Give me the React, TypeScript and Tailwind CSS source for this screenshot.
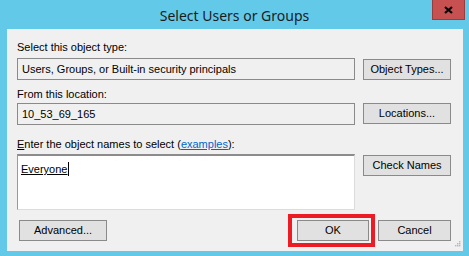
import React from "react";

const ui = { fontFamily: '"Liberation Sans", Arial, sans-serif' };

function Btn({ children, className = "" }: { children: React.ReactNode; className?: string }) {
  return (
    <div
      className={`h-[21px] flex items-center justify-center border border-[#8a8a8a] bg-[#e1e1e1] text-[11px] text-black ${className}`}
    >
      {children}
    </div>
  );
}

function ReadBox({ text }: { text: string }) {
  return (
    <div className="w-[338px] h-[22px] flex items-center pl-[4px] border border-[#8a8a8a] bg-[#f0f0f0] text-[11px] text-black">
      {text}
    </div>
  );
}

export default function App() {
  return (
    <div className="w-[469px] h-[256px] bg-[#63c9e9] flex flex-col" style={ui}>
      {/* title bar */}
      <div className="relative h-[29px] flex items-center justify-center">
        <span
          className="text-[14px] text-[#1b1b1b] pt-[1px]"
          style={{ fontFamily: '"Noto Sans", "Open Sans", sans-serif' }}
        >
          Select Users or Groups
        </span>
        <div className="absolute right-[4px] top-0 w-[33px] h-[20px] bg-[#c75050] border border-t-0 border-[#9b3c3c] flex items-center justify-center">
          <svg width="9" height="8" viewBox="0 0 9 8">
            <path d="M1 1 L8 7 M8 1 L1 7" stroke="#000" strokeWidth="2.2" />
          </svg>
        </div>
      </div>

      {/* client area */}
      <div className="relative ml-[7px] w-[456px] h-[222px] bg-[#f0f0f0] pl-[10px] pt-[12px] text-[11px] leading-[13px] text-black">
        <div className="h-[13px]">Select this object type:</div>
        <div className="mt-[4px] flex items-start gap-[8px]">
          <ReadBox text="Users, Groups, or Built-in security principals" />
          <Btn className="w-[88px] mt-[1px]">Object Types...</Btn>
        </div>

        <div className="mt-[8px] h-[13px]">From this location:</div>
        <div className="mt-[2px] flex items-start gap-[8px]">
          <ReadBox text="10_53_69_165" />
          <Btn className="w-[88px]">Locations...</Btn>
        </div>

        <div className="mt-[13px] h-[13px]">
          <span className="underline">E</span>nter the object names to select (
          <span className="text-[#0066cc] underline">examples</span>):
        </div>
        <div className="mt-[3px] flex items-start gap-[8px]">
          <div className="w-[338px] h-[56px] bg-white border border-t-2 border-t-[#8c8c8c] border-l-[#9a9a9a] border-r-[#dcdcdc] border-b-[#dcdcdc] pl-[3px] pt-[6px]">
            <span className="underline">Everyone</span>
            <span className="inline-block w-px h-[14px] bg-black align-[-3px] ml-[1px]" />
          </div>
          <Btn className="w-[88px] mt-[1px]">Check Names</Btn>
        </div>

        <div className="mt-[4px] flex items-center">
          <Btn className="w-[88px] ml-[2px]">Advanced...</Btn>
          <div className="ml-[181px] border-[4px] border-[#ed1c24] pl-[5px] pr-[2px] py-[2px]">
            <Btn className="w-[72px]">OK</Btn>
          </div>
          <Btn className="w-[73px] ml-[3px]">Cancel</Btn>
        </div>

        {/* size grip */}
        <svg className="absolute right-[2px] bottom-[3px]" width="7" height="7" viewBox="0 0 7 7">
          <g fill="#b5b5b5">
            <rect x="5" y="0" width="1.4" height="1.4" />
            <rect x="3" y="2" width="1.4" height="1.4" />
            <rect x="5" y="2" width="1.4" height="1.4" />
            <rect x="1" y="4" width="1.4" height="1.4" />
            <rect x="3" y="4" width="1.4" height="1.4" />
            <rect x="5" y="4" width="1.4" height="1.4" />
          </g>
        </svg>
      </div>
    </div>
  );
}
